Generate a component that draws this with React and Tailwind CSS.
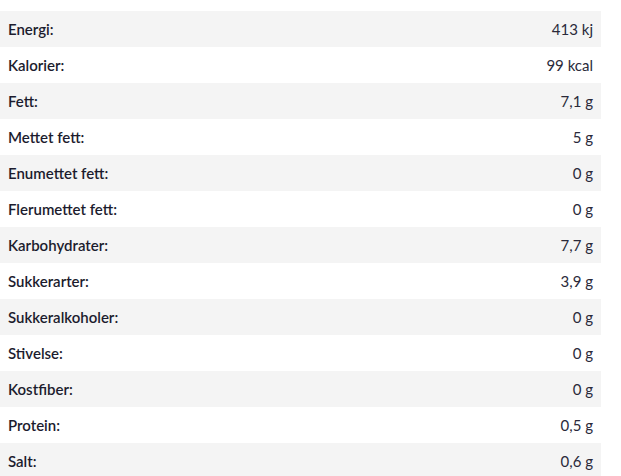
import React from "react";

const rows = [
  { label: "Energi:", value: "413 kj" },
  { label: "Kalorier:", value: "99 kcal" },
  { label: "Fett:", value: "7,1 g" },
  { label: "Mettet fett:", value: "5 g" },
  { label: "Enumettet fett:", value: "0 g" },
  { label: "Flerumettet fett:", value: "0 g" },
  { label: "Karbohydrater:", value: "7,7 g" },
  { label: "Sukkerarter:", value: "3,9 g" },
  { label: "Sukkeralkoholer:", value: "0 g" },
  { label: "Stivelse:", value: "0 g" },
  { label: "Kostfiber:", value: "0 g" },
  { label: "Protein:", value: "0,5 g" },
  { label: "Salt:", value: "0,6 g" },
];

const App = () => {
  return (
    <div className="min-h-screen bg-white pt-[11px] font-['Lato',sans-serif] text-[15px] text-[#1c1c2e]">
      <div className="w-[601px]">
        {rows.map((row, i) => (
          <div
            key={row.label}
            className={`flex h-9 items-center justify-between px-2 ${
              i % 2 === 0 ? "bg-[#f4f4f4]" : "bg-white"
            }`}
          >
            <span className="font-semibold">{row.label}</span>
            <span className="text-[#2a2a3a]">{row.value}</span>
          </div>
        ))}
      </div>
    </div>
  );
};

export default App;
